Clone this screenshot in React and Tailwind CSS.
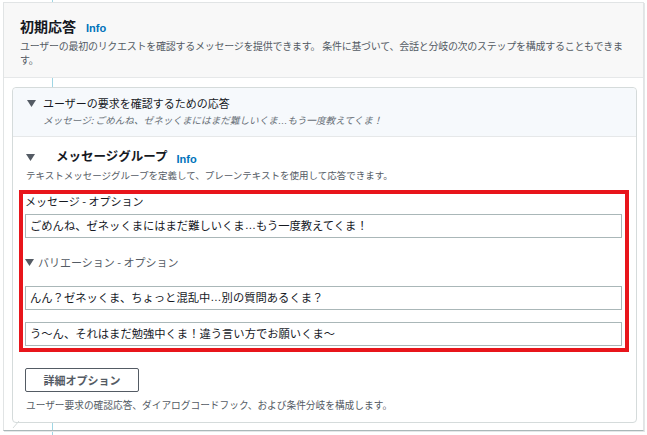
import React from 'react';

const jp = { fontFamily: '"Noto Sans CJK JP", "Noto Sans", sans-serif' };
const latin = { fontFamily: '"Liberation Sans", Arial, sans-serif' };

function Caret({ className = '' }) {
  return (
    <svg width="9" height="7" viewBox="0 0 9 7" className={`shrink-0 ${className}`}>
      <polygon points="0,0 9,0 4.5,7" fill="#545b64" />
    </svg>
  );
}

function Info() {
  return (
    <span style={latin} className="text-[11px] font-bold text-[#0073bb]">
      Info
    </span>
  );
}

// latin ellipsis sits on the baseline like the reference
function Dots() {
  return <span style={latin}>…</span>;
}

function TextBox({ children }) {
  return (
    <div className="h-[24px] border border-[#aab7b8] bg-white flex items-center px-[4px] text-[11.3px] text-[#16191f] leading-none whitespace-nowrap">
      {children}
    </div>
  );
}

export default function App() {
  return (
    <div style={jp} className="relative w-[647px] h-[435px] bg-white overflow-hidden pt-[2px] pl-[3px] pr-[3px]">
      {/* connector line */}
      <div className="absolute left-[52px] top-0 bottom-0 w-px bg-[#9fd6e4]" />

      <div className="relative border border-[#e1e4e5] border-b-[#aab7b8] shadow-[1px_1px_0_#e4e7e8] h-[429px]">
        {/* header */}
        <div className="relative z-10 bg-[#f8f8f8] border-b border-[#e6e8e9] h-[75px] pl-[16px] pr-[12px] pt-[13px]">
          <div className="flex items-baseline gap-[10px] h-[20px]">
            <span className="text-[14px] font-bold text-[#16191f] leading-[20px]">初期応答</span>
            <Info />
          </div>
          <p className="mt-[3px] text-[10px] tracking-[-0.27px] leading-[14px] text-[#545b64]">
            ユーザーの最初のリクエストを確認するメッセージを提供できます。 条件に基づいて、会話と分岐の次のステップを構成することもできます。
          </p>
        </div>

        {/* card */}
        <div className="relative z-10 mt-[9px] ml-[8px] mr-[6px] border border-[#d5dbdb] rounded-[4px] bg-white">
          <div className="bg-[#f6f9fc] border-b border-[#e6e8e9] rounded-t-[4px] pt-[7px] pb-[9px] pl-[14px]">
            <div className="flex items-center gap-[7px] h-[16px]">
              <Caret />
              <span className="text-[11px] text-[#16191f] leading-none">ユーザーの要求を確認するための応答</span>
            </div>
            <div className="mt-[2px] pl-[16px] h-[14px] text-[9.6px] italic text-[#687078] leading-[14px]">
              メッセージ: ごめんね、ゼネッくまにはまだ難しいくま<Dots />もう一度教えてくま！
            </div>
          </div>

          <div className="px-[13px] pt-[9px] pb-[10px]">
            <div className="flex items-center h-[20px]">
              <Caret className="mt-[3px]" />
              <span className="ml-[21px] text-[12.5px] font-bold text-[#16191f] leading-none">メッセージグループ</span>
              <span className="ml-[9px]"><Info /></span>
            </div>
            <p className="mt-[2px] text-[9.5px] leading-[14px] text-[#545b64]">
              テキストメッセージグループを定義して、プレーンテキストを使用して応答できます。
            </p>

            <div className="mt-[8px] -ml-[7px] -mr-[6px] border-4 border-[#e8151b] pl-[2px] pr-[3px] pb-[2px]">
              <div className="h-[14px] text-[11px] leading-[14px] text-[#16191f]">メッセージ - オプション</div>
              <div className="mt-[6px]">
                <TextBox>ごめんね、ゼネッくまにはまだ難しいくま<Dots />もう一度教えてくま！</TextBox>
              </div>
              <div className="mt-[17px] h-[14px] flex items-center gap-[4px] text-[11px] text-[#545b64]">
                <Caret />
                <span className="leading-none">バリエーション - オプション</span>
              </div>
              <div className="mt-[17px]">
                <TextBox>んん？ゼネッくま、ちょっと混乱中<Dots />別の質問あるくま？</TextBox>
              </div>
              <div className="mt-[12px]">
                <TextBox>う〜ん、それはまだ勉強中くま！違う言い方でお願いくま〜</TextBox>
              </div>
            </div>

            <button className="mt-[16px] -ml-[1px] w-[114px] h-[24px] border border-[#545b64] rounded-[2px] bg-white text-[11px] font-bold text-[#545b64] leading-none">
              詳細オプション
            </button>
            <p className="mt-[6px] text-[9.7px] leading-[14px] text-[#545b64]">
              ユーザー要求の確認応答、ダイアログコードフック、および条件分岐を構成します。
            </p>
          </div>

          <svg width="8" height="8" viewBox="0 0 8 8" className="absolute -left-[1px] -bottom-[7px]">
            <line x1="7" y1="0" x2="1" y2="7" stroke="#d5dbdb" strokeWidth="1" />
          </svg>
        </div>
      </div>
    </div>
  );
}
